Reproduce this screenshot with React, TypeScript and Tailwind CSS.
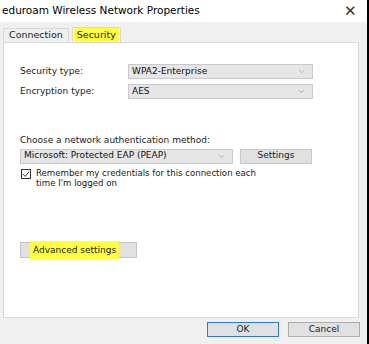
import { ChevronDown } from "lucide-react";

function Select({ value, className }: { value: string; className: string }) {
  return (
    <div
      className={`flex h-[15px] items-center justify-between border border-[#c9c9c9] bg-[#e6e6e6] pl-[3px] pr-[6px] ${className}`}
    >
      <span className="text-[#111]">{value}</span>
      <ChevronDown className="h-[9px] w-[9px] text-[#888]" strokeWidth={1.5} />
    </div>
  );
}

export default function App() {
  return (
    <div className="flex h-[344px] w-[369px] flex-col overflow-hidden border-r-2 border-black bg-[#f0f0f0] font-['DejaVu_Sans',sans-serif] text-[9px] text-[#1a1a1a]">
      {/* title bar */}
      <div className="flex h-[22px] shrink-0 items-center justify-between bg-white pl-[2px] pr-[10px]">
        <span className="text-[10.5px] text-black">eduroam Wireless Network Properties</span>
        <span className="text-[15px] font-light leading-none text-[#333]">✕</span>
      </div>

      {/* tabs */}
      <div className="flex items-end gap-[3px] px-[3px] pt-[5px]">
        <div className="flex h-[14px] items-center border border-b-0 border-[#d9d9d9] bg-[#f0f0f0] px-[5px] text-[9.5px]">
          Connection
        </div>
        <div className="flex h-[15px] items-center border border-b-0 border-[#d9d9d9] bg-white px-[1px]">
          <span className="bg-[#ffff3c] px-[3px] text-[9.5px] leading-[14px]">Security</span>
        </div>
      </div>

      {/* panel */}
      <div className="mx-[3px] mr-[8px] flex h-[276px] flex-col border border-[#dadada] bg-white px-[16px] pt-[21px]">
        <div className="flex items-center">
          <span className="w-[108px]">Security type:</span>
          <Select value="WPA2-Enterprise" className="w-[185px]" />
        </div>
        <div className="mt-[5px] flex items-center">
          <span className="w-[108px]">Encryption type:</span>
          <Select value="AES" className="w-[185px]" />
        </div>

        <div className="mt-[35px]">Choose a network authentication method:</div>
        <div className="mt-[1px] flex items-center gap-[7px]">
          <Select value="Microsoft: Protected EAP (PEAP)" className="w-[213px]" />
          <div className="flex h-[15px] w-[72px] items-center justify-center border border-[#c9c9c9] bg-[#e1e1e1]">
            Settings
          </div>
        </div>
        <div className="mt-[4px] flex items-start gap-[5px] pl-[1px]">
          <div className="mt-[1px] flex h-[10px] w-[10px] shrink-0 items-center justify-center border border-[#333]">
            <svg viewBox="0 0 10 10" className="h-[8px] w-[8px]">
              <path d="M1 5 L4 8 L9 2" fill="none" stroke="#333" strokeWidth="1.2" />
            </svg>
          </div>
          <div className="text-[8.6px] leading-[10px]">
            Remember my credentials for this connection each
            <br />
            time I'm logged on
          </div>
        </div>

        <div className="mt-[54px] flex h-[16px] w-[117px] items-center border border-[#c4c4c4] bg-[#e1e1e1] pl-[9px]">
          <span className="bg-[#ffff3c] px-[3px] leading-[18px]">Advanced settings</span>
        </div>
      </div>

      {/* bottom buttons */}
      <div className="flex justify-end gap-[9px] pr-[7px] pt-[4px]">
        <div className="flex h-[15px] w-[72px] items-center justify-center border border-[#2f7ad7] bg-[#e1e1e1]">
          OK
        </div>
        <div className="flex h-[15px] w-[72px] items-center justify-center border border-[#adadad] bg-[#e1e1e1]">
          Cancel
        </div>
      </div>
    </div>
  );
}
